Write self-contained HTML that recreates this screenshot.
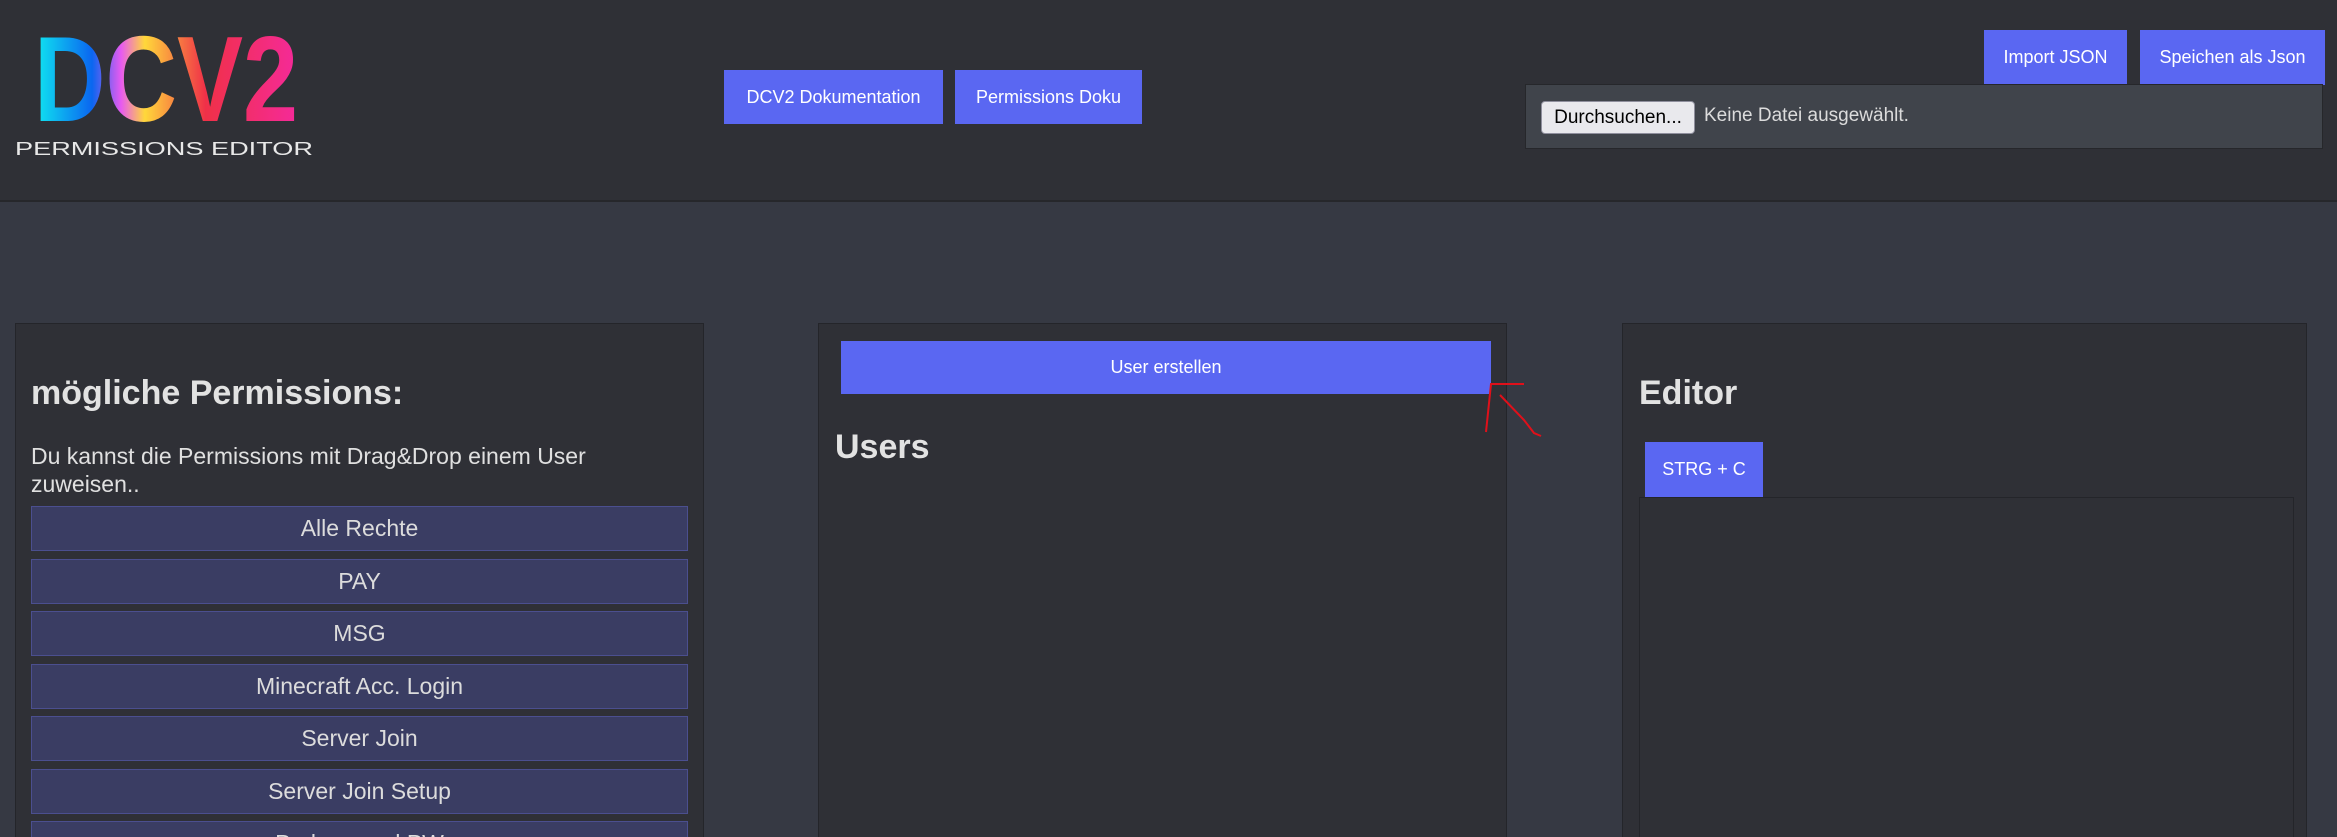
<!DOCTYPE html>
<html><head><meta charset="utf-8"><style>
*{box-sizing:border-box;margin:0;padding:0}
html{width:2337px;height:837px;overflow:hidden}
body{width:2337px;height:837px;overflow:hidden;background:#363943;font-family:"Liberation Sans",sans-serif;color:#e0e0e0;position:relative}
#wrap{position:absolute;left:0;top:0;width:2337px;height:837px;overflow:hidden}
.abs{position:absolute}
header{position:absolute;left:0;top:0;width:2337px;height:202px;background:#2f3036;border-bottom:2px solid #26272b}
.btn{position:absolute;background:#5a67f2;color:#fff;font-size:18px;display:flex;align-items:center;justify-content:center}
.panel{position:absolute;top:323px;height:514px;overflow:hidden;background:#2f3036;border:1px solid #24252a;border-bottom:none}
.item{position:absolute;left:15px;width:657px;height:45px;background:#3a3d63;border:1px solid #4b4f8f;display:flex;align-items:center;justify-content:center;font-size:23px;color:#dcdcdc}
h2{position:absolute;font-size:34px;font-weight:bold;color:#e2e2e2}
</style></head><body><div id="wrap">
<header>
<svg class="abs" style="left:0;top:0" width="340" height="200">
<defs><linearGradient id="g" x1="34" y1="0" x2="298" y2="0" gradientUnits="userSpaceOnUse">
<stop offset="0" stop-color="#10eaf0"/><stop offset="0.22" stop-color="#0a66f0"/><stop offset="0.33" stop-color="#e85af0"/><stop offset="0.42" stop-color="#ffd83a"/><stop offset="0.65" stop-color="#f03048"/><stop offset="1" stop-color="#f52a9a"/></linearGradient></defs>
<text x="34" y="121" font-family="Liberation Sans" font-weight="bold" font-size="122" fill="url(#g)" textLength="264" lengthAdjust="spacingAndGlyphs">DCV2</text>
<text x="15" y="155" font-family="Liberation Sans" font-size="18" fill="#e8e8e8" textLength="298" lengthAdjust="spacingAndGlyphs">PERMISSIONS EDITOR</text>
</svg>
<div class="btn" style="left:724px;top:70px;width:219px;height:54px">DCV2 Dokumentation</div>
<div class="btn" style="left:955px;top:70px;width:187px;height:54px">Permissions Doku</div>
<div class="btn" style="left:1984px;top:30px;width:143px;height:55px">Import JSON</div>
<div class="btn" style="left:2140px;top:30px;width:185px;height:55px">Speichen als Json</div>
<div class="abs" style="left:1525px;top:84px;width:798px;height:65px;background:#40444b;border:1px solid #26272b">
<div class="abs" style="left:15px;top:16px;width:154px;height:33px;background:#e9e9ed;border:1px solid #8f8f9d;border-radius:4px;color:#000;font-size:19px;display:flex;align-items:center;justify-content:center">Durchsuchen...</div>
<div class="abs" style="left:178px;top:20px;font-size:19px;color:#dcdcdc">Keine Datei ausgewählt.</div>
</div>
</header>
<div class="panel" style="left:15px;width:689px">
<h2 style="left:15px;top:50px">mögliche Permissions:</h2>
<div class="abs" style="left:15px;top:118px;width:660px;font-size:23px;line-height:28px;color:#e0e0e0">Du kannst die Permissions mit Drag&amp;Drop einem User zuweisen..</div>
<div class="item" style="top:182px">Alle Rechte</div>
<div class="item" style="top:235px">PAY</div>
<div class="item" style="top:287px">MSG</div>
<div class="item" style="top:340px">Minecraft Acc. Login</div>
<div class="item" style="top:392px">Server Join</div>
<div class="item" style="top:445px">Server Join Setup</div>
<div class="item" style="top:497px">Parkour und PW</div>
</div>
<div class="panel" style="left:818px;width:689px">
<div class="btn" style="left:22px;top:17px;width:650px;height:53px">User erstellen</div>
<h2 style="left:16px;top:104px">Users</h2>
</div>
<div class="panel" style="left:1622px;width:685px">
<h2 style="left:16px;top:50px">Editor</h2>
<div class="btn" style="left:22px;top:118px;width:118px;height:55px">STRG + C</div>
<div class="abs" style="left:16px;top:173px;width:655px;height:341px;border:1px solid #24252a;border-bottom:none;background:#2f3036"></div>
</div>
<svg class="abs" style="left:0;top:0" width="2337" height="837" fill="none" stroke="#e0101a" stroke-width="2">
<polyline points="1524,384 1491,384 1486,432"/>
<polyline points="1500,395 1524,420 1534,433 1541,436"/>
</svg>
</div></body></html>
